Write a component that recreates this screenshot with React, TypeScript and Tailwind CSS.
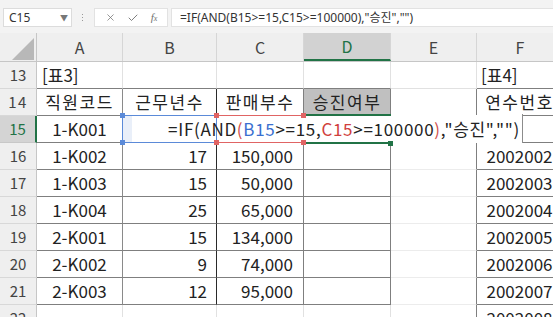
import { Check, X } from "lucide-react"

const base = "shrink-0 box-border h-full border-r border-b flex items-center"

const rows = [
  { n: 16, a: "1-K002", b: "17", c: "150,000", f: "2002002" },
  { n: 17, a: "1-K003", b: "15", c: "50,000", f: "2002003" },
  { n: 18, a: "1-K004", b: "25", c: "65,000", f: "2002004" },
  { n: 19, a: "2-K001", b: "15", c: "134,000", f: "2002005" },
  { n: 20, a: "2-K002", b: "9", c: "74,000", f: "2002006" },
  { n: 21, a: "2-K003", b: "12", c: "95,000", f: "2002007" },
]

function RowHead({ n, active }: { n: number; active?: boolean }) {
  if (active) {
    return (
      <div className="shrink-0 box-border h-full w-[37px] border-b border-b-[#c8c8c8] border-r-2 border-r-[#217346] bg-[#d4d4d4] flex items-center justify-center text-[15px] text-[#217346]">
        {n}
      </div>
    )
  }
  return (
    <div className="shrink-0 box-border h-full w-[37px] border-r border-b border-r-[#c6c6c6] border-b-[#d8d8d8] bg-[#efefef] flex items-center justify-center text-[15px] text-[#444]">
      {n}
    </div>
  )
}

function Square({ className }: { className: string }) {
  return <div className={"absolute w-[5px] h-[5px] " + className} />
}

export default function App() {
  return (
    <div className="w-[553px] h-[317px] overflow-hidden bg-white font-['Noto_Sans_CJK_KR',sans-serif] text-[#222]">
      {/* 수식 입력줄 */}
      <div className="h-[33px] bg-[#f3f3f3] flex items-start pt-[8px] font-['Noto_Sans','Noto_Sans_CJK_KR',sans-serif]">
        <div className="ml-[3px] w-[69px] h-[19px] bg-white border border-[#dcdcdc] flex items-center justify-between pl-[5px] pr-[3px] text-[12px] text-[#333]">
          <span>C15</span>
          <span className="text-[8px] text-[#777]">▼</span>
        </div>
        <div className="ml-[10px] mt-[6px] flex flex-col gap-[2px]">
          <div className="w-[1px] h-[1px] bg-[#999]" />
          <div className="w-[1px] h-[1px] bg-[#999]" />
          <div className="w-[1px] h-[1px] bg-[#999]" />
        </div>
        <div className="ml-[11px] w-[74px] h-[19px] bg-white border border-[#e2e2e2] flex items-center justify-around px-[4px] text-[#707070]">
          <X size={11} strokeWidth={1.6} />
          <Check size={12} strokeWidth={1.8} />
          <span className="font-['Liberation_Serif',serif] italic text-[11px] leading-none">
            f<span className="text-[8px]">x</span>
          </span>
        </div>
        <div className="ml-[3px] flex-1 h-[19px] bg-white border-y border-l border-[#e2e2e2] flex items-center pl-[8px] text-[12px] text-[#333] whitespace-nowrap">
          =IF(AND(B15&gt;=15,C15&gt;=100000),"승진","")
        </div>
      </div>

      {/* 열 머리글 */}
      <div className="flex h-[29px] bg-[#efefef] text-[16px] text-[#444] border-b border-[#c6c6c6]">
        <div className="shrink-0 w-[37px] h-full border-r border-[#c6c6c6] relative">
          <svg className="absolute left-[12px] top-[5px]" width="22" height="22" viewBox="0 0 22 22">
            <polygon points="22,0 22,22 0,22" fill="#b8b8b8" />
          </svg>
        </div>
        <div className="shrink-0 w-[86px] h-full border-r border-[#d6d6d6] flex items-center justify-center">A</div>
        <div className="shrink-0 w-[94px] h-full border-r border-[#d6d6d6] flex items-center justify-center">B</div>
        <div className="shrink-0 w-[87px] h-full border-r border-[#d6d6d6] flex items-center justify-center">C</div>
        <div className="shrink-0 w-[87px] h-full border-r border-[#d6d6d6] bg-[#d2d2d2] border-b-2 border-b-[#217346] flex items-center justify-center text-[#217346]">D</div>
        <div className="shrink-0 w-[86px] h-full border-r border-[#d6d6d6] flex items-center justify-center">E</div>
        <div className="shrink-0 w-[86px] h-full flex items-center justify-center">F</div>
      </div>

      {/* 13행 */}
      <div className="flex h-[27px] text-[17px]">
        <RowHead n={13} />
        <div className={base + " w-[86px] border-r-[#e1e1e1] border-b-[#7f7f7f] pl-[5px]"}>[표3]</div>
        <div className={base + " w-[94px] border-r-[#e1e1e1] border-b-[#7f7f7f]"} />
        <div className={base + " w-[87px] border-r-[#e1e1e1] border-b-[#7f7f7f]"} />
        <div className={base + " w-[87px] border-r-[#e1e1e1] border-b-[#7f7f7f]"} />
        <div className={base + " w-[86px] border-r-[#e1e1e1] border-b-[#e1e1e1]"} />
        <div className={base + " w-[86px] border-r-[#e1e1e1] border-b-[#7f7f7f] pl-[4px]"}>[표4]</div>
      </div>

      {/* 14행 */}
      <div className="flex h-[27px] text-[17px] tracking-[1.5px]">
        <RowHead n={14} />
        <div className={base + " w-[86px] border-r-[#8a8a8a] border-b-[#7f7f7f] justify-center"}>직원코드</div>
        <div className={base + " w-[94px] border-r-[#2a2a2a] border-b-[#7f7f7f] justify-center"}>근무년수</div>
        <div className={base + " w-[87px] border-r-[#7f7f7f] border-b-[#7f7f7f] justify-center"}>판매부수</div>
        <div className={base + " w-[87px] border-r-[#7f7f7f] border-b-[#7f7f7f] bg-[#c0c0c0] justify-center"}>승진여부</div>
        <div className={base + " w-[86px] border-r-[#7f7f7f] border-b-[#e1e1e1]"} />
        <div className={base + " w-[86px] border-r-[#7f7f7f] border-b-[#7f7f7f] justify-center"}>연수번호</div>
      </div>

      {/* 15행 (편집 중) */}
      <div className="relative flex h-[27px] text-[17px]">
        <RowHead n={15} active />
        <div className={base + " w-[86px] border-r-[#8a8a8a] border-b-[#7f7f7f] justify-center"}>1-K001</div>
        <div className={base + " w-[94px] border-r-[#2a2a2a] border-b-[#7f7f7f]"} />
        <div className={base + " w-[87px] border-r-[#7f7f7f] border-b-[#7f7f7f]"} />
        <div className={base + " w-[87px] border-r-[#7f7f7f] border-b-[#7f7f7f]"} />
        <div className={base + " w-[86px] border-r-[#7f7f7f] border-b-[#e1e1e1]"} />
        <div className={base + " w-[86px] border-r-[#7f7f7f] border-b-[#7f7f7f]"} />

        <div className="absolute left-[122px] top-[-1px] w-[401px] h-[28px] bg-white">
          <div className="absolute left-[1px] top-[1px] w-[9px] h-[26px] bg-[#e9eff9]" />
          <div className="absolute left-0 top-0 w-[95px] h-[28px] border border-[#5b8ad8]" />
          <div className="absolute left-[94px] top-0 w-[88px] h-[28px] border-y border-[#e06464]" />
          <div className="absolute left-[181px] top-[-1px] w-[88px] h-[30px] border-y-2 border-[#217346]" />
          <div className="absolute right-0 top-[-1px] w-[1px] h-[29px] bg-[#8c8c8c]" />
          <Square className="left-[-2px] top-[-2px] bg-[#5b8ad8]" />
          <Square className="left-[-2px] top-[25px] bg-[#5b8ad8]" />
          <Square className="left-[92px] top-[-2px] bg-[#e06464]" />
          <Square className="left-[92px] top-[25px] bg-[#e06464]" />
          <Square className="left-[179px] top-[-2px] bg-[#e06464]" />
          <Square className="left-[179px] top-[25px] bg-[#e06464]" />
          <Square className="left-[266px] top-[26px] bg-[#217346]" />
          <div className="absolute inset-0 flex items-center justify-end pr-[3px] whitespace-nowrap tracking-[0.7px]">
            <span>=IF(AND</span>
            <span className="text-[#d0504d]">(</span>
            <span className="text-[#3a6fd0]">B15</span>
            <span>&gt;=15,</span>
            <span className="text-[#d0403d]">C15</span>
            <span>&gt;=100000</span>
            <span className="text-[#d0504d]">)</span>
            <span>,"승진","")</span>
          </div>
        </div>
      </div>

      {/* 16~21행 */}
      {rows.map((r) => (
        <div key={r.n} className="flex h-[27px] text-[17px]">
          <RowHead n={r.n} />
          <div className={base + " w-[86px] border-r-[#8a8a8a] border-b-[#7f7f7f] justify-center"}>{r.a}</div>
          <div className={base + " w-[94px] border-r-[#2a2a2a] border-b-[#7f7f7f] justify-end pr-[9px]"}>{r.b}</div>
          <div className={base + " w-[87px] border-r-[#7f7f7f] border-b-[#7f7f7f] justify-end pr-[10px]"}>{r.c}</div>
          <div className={base + " w-[87px] border-r-[#7f7f7f] border-b-[#7f7f7f]"} />
          <div className={base + " w-[86px] border-r-[#7f7f7f] border-b-[#ececec]"} />
          <div className={base + " w-[86px] border-r-[#7f7f7f] border-b-[#7f7f7f] justify-center"}>{r.f}</div>
        </div>
      ))}

      {/* 22행 */}
      <div className="flex h-[27px] text-[17px]">
        <RowHead n={22} />
        <div className={base + " w-[86px] border-r-[#e1e1e1] border-b-[#e1e1e1]"} />
        <div className={base + " w-[94px] border-r-[#e1e1e1] border-b-[#e1e1e1]"} />
        <div className={base + " w-[87px] border-r-[#e1e1e1] border-b-[#e1e1e1]"} />
        <div className={base + " w-[87px] border-r-[#e1e1e1] border-b-[#e1e1e1]"} />
        <div className={base + " w-[86px] border-r-[#7f7f7f] border-b-[#e1e1e1]"} />
        <div className={base + " w-[86px] border-r-[#7f7f7f] border-b-[#7f7f7f] justify-center"}>2002008</div>
      </div>
    </div>
  )
}
